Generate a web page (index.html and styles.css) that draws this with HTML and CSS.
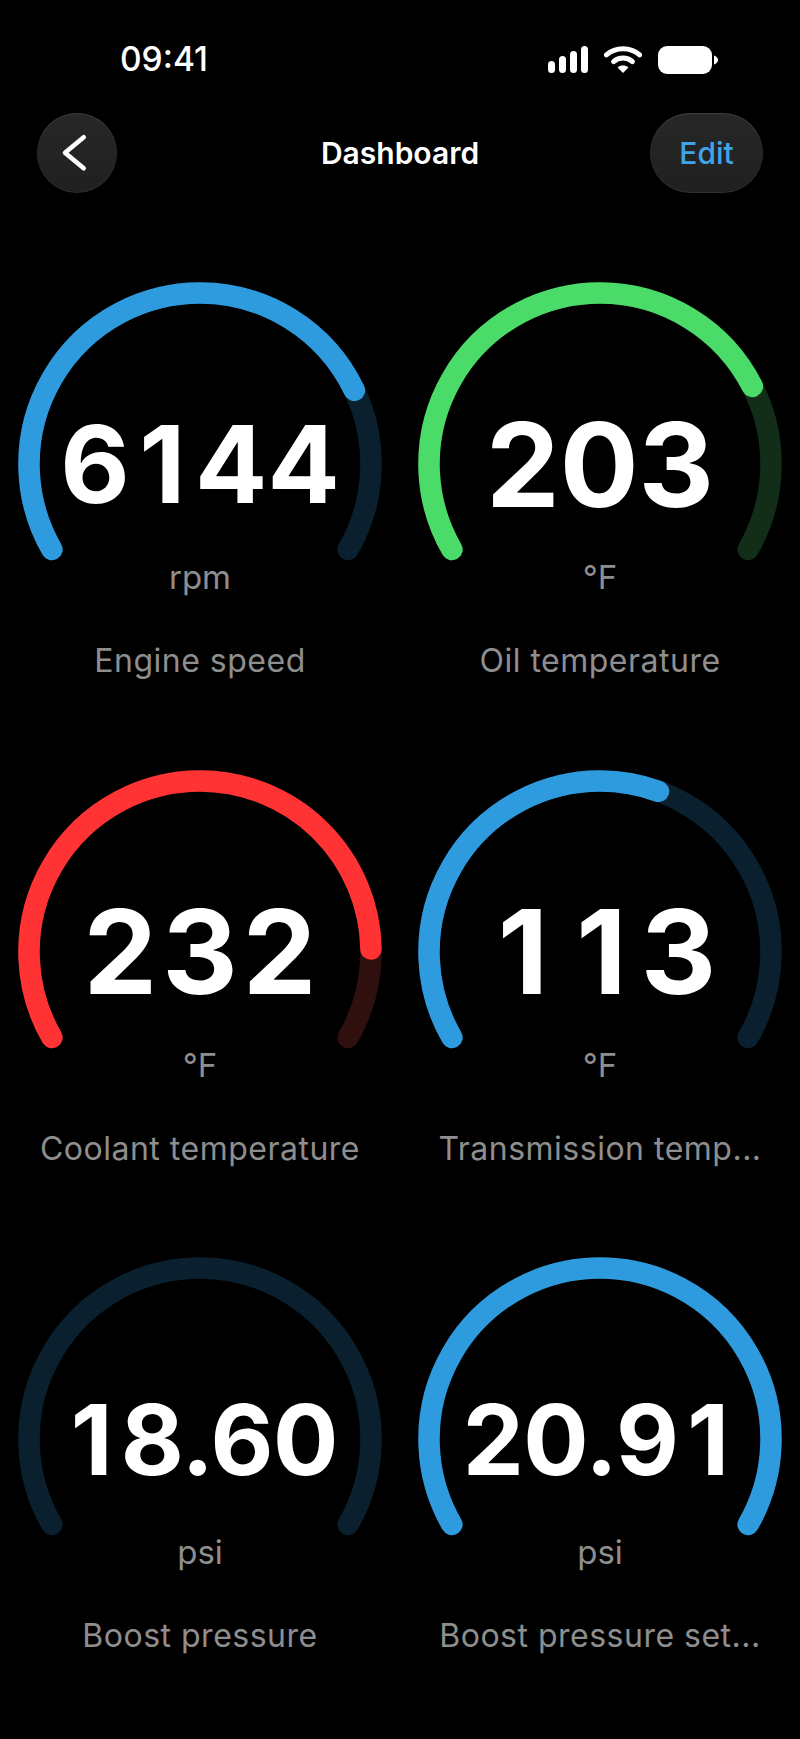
FILE: index.html
```html
<!DOCTYPE html>
<html lang="en">
<head>
<meta charset="utf-8">
<title>Dashboard</title>
<link rel="stylesheet" href="styles.css">
</head>
<body>
<div class="screen">
  <header class="status">
    <span class="time">09:41</span>
    <div class="status-icons">
      <svg class="signal" width="40" height="27" viewBox="0 0 40 27"><rect x="0" y="15" width="7" height="12" rx="3.5"/><rect x="11" y="10" width="7" height="17" rx="3.5"/><rect x="22" y="5" width="7" height="22" rx="3.5"/><rect x="33" y="0" width="7" height="27" rx="3.5"/></svg>
      <svg class="wifi" width="38" height="27" viewBox="0 0 38 27"><path class="wifi-arc" d="M2.4 8.8C11.6 0.6 26.4 0.6 35.6 8.8"/><path class="wifi-arc" d="M9.6 15.6C15 10.9 23 10.9 28.4 15.6"/><path class="wifi-dot" d="M19 27L13.6 21.4C16.6 18.8 21.4 18.8 24.4 21.4Z"/></svg>
      <svg class="battery" width="60" height="28" viewBox="0 0 60 28"><rect x="0" y="0" width="54" height="28" rx="9"/><path d="M56 9.5C58.4 10.2 60 11.8 60 14C60 16.2 58.4 17.8 56 18.5Z"/></svg>
    </div>
  </header>
  <nav class="nav">
    <button class="back" aria-label="Back"><svg width="30" height="40" viewBox="0 0 30 40"><path d="M22.7 4.3L4 19.7L22.7 35.3"/></svg></button>
    <h1 class="title">Dashboard</h1>
    <button class="edit">Edit</button>
  </nav>
  <main class="grid">
    <section class="cell blue">
      <div class="gauge">
        <svg class="dial" width="400" height="280" viewBox="0 0 400 280"><path class="track" d="M51.9 267.5A171 171 0 1 1 348.1 267.5"/><path class="fill" pathLength="240" stroke-dasharray="184.5 1000" d="M51.9 267.5A171 171 0 1 1 348.1 267.5"/></svg>
        <div class="value md">6<span class="one">1</span>44</div>
      </div>
      <div class="unit">rpm</div>
      <div class="label">Engine speed</div>
    </section>
    <section class="cell green">
      <div class="gauge">
        <svg class="dial" width="400" height="280" viewBox="0 0 400 280"><path class="track" d="M51.9 267.5A171 171 0 1 1 348.1 267.5"/><path class="fill" pathLength="240" stroke-dasharray="183 1000" d="M51.9 267.5A171 171 0 1 1 348.1 267.5"/></svg>
        <div class="value lg">203</div>
      </div>
      <div class="unit">°F</div>
      <div class="label">Oil temperature</div>
    </section>
    <section class="cell red">
      <div class="gauge">
        <svg class="dial" width="400" height="280" viewBox="0 0 400 280"><path class="track" d="M51.9 267.5A171 171 0 1 1 348.1 267.5"/><path class="fill" pathLength="240" stroke-dasharray="209 1000" d="M51.9 267.5A171 171 0 1 1 348.1 267.5"/></svg>
        <div class="value lg wide">232</div>
      </div>
      <div class="unit">°F</div>
      <div class="label">Coolant temperature</div>
    </section>
    <section class="cell blue">
      <div class="gauge">
        <svg class="dial" width="400" height="280" viewBox="0 0 400 280"><path class="track" d="M51.9 267.5A171 171 0 1 1 348.1 267.5"/><path class="fill" pathLength="240" stroke-dasharray="140 1000" d="M51.9 267.5A171 171 0 1 1 348.1 267.5"/></svg>
        <div class="value lg"><span class="one">1</span><span class="one">1</span>3</div>
      </div>
      <div class="unit">°F</div>
      <div class="label">Transmission temp...</div>
    </section>
    <section class="cell blue">
      <div class="gauge">
        <svg class="dial" width="400" height="280" viewBox="0 0 400 280"><path class="track" d="M51.9 267.5A171 171 0 1 1 348.1 267.5"/></svg>
        <div class="value sm"><span class="one">1</span>8.60</div>
      </div>
      <div class="unit">psi</div>
      <div class="label">Boost pressure</div>
    </section>
    <section class="cell blue">
      <div class="gauge">
        <svg class="dial" width="400" height="280" viewBox="0 0 400 280"><path class="fill" d="M51.9 267.5A171 171 0 1 1 348.1 267.5"/></svg>
        <div class="value sm">20.9<span class="one">1</span></div>
      </div>
      <div class="unit">psi</div>
      <div class="label">Boost pressure set...</div>
    </section>
  </main>
</div>
</body>
</html>
```
FILE: styles.css
```css
* { box-sizing: border-box; }
html, body { margin: 0; padding: 0; background: #000; }
body { font-family: Inter, "Liberation Sans", sans-serif; color: #fff; }
.screen { width: 800px; height: 1739px; overflow: hidden; background: #000; }

.status { height: 113px; padding: 43px 82px 0 120px; display: flex; justify-content: space-between; align-items: flex-start; }
.time { font-size: 33.5px; line-height: 32px; font-weight: 500; }
.status-icons { display: flex; align-items: flex-start; gap: 16px; padding-top: 3px; }
.status-icons svg { display: block; fill: #fff; }
.wifi-arc { fill: none; stroke: #fff; stroke-width: 5; stroke-linecap: round; }

.nav { display: grid; grid-template-columns: 1fr auto 1fr; align-items: center; padding: 0 37px; height: 80px; }
.back, .edit { border: 0; padding: 0; height: 80px; color: inherit; font: inherit; background: linear-gradient(#272727, #202020); box-shadow: inset 0 1px 1px rgba(255,255,255,.12), inset 0 -1px 1px rgba(255,255,255,.07); }
.back { width: 80px; border-radius: 50%; display: flex; align-items: center; justify-content: center; justify-self: start; }
.back svg { display: block; fill: none; stroke: #fff; stroke-width: 4.6; stroke-linecap: round; stroke-linejoin: round; margin-left: -2px; }
.title { margin: 0; font-size: 30px; line-height: 36px; font-weight: 600; }
.edit { width: 113px; border-radius: 40px; justify-self: end; color: #3fa5e8; font-size: 30px; font-weight: 500; }

.grid { margin-top: 89px; display: grid; grid-template-columns: 400px 400px; grid-auto-rows: 487.5px; }
.cell { display: flex; flex-direction: column; align-items: center; }
.gauge { display: grid; width: 400px; height: 280px; }
.dial, .value { grid-area: 1 / 1; }
.dial { display: block; fill: none; stroke-width: 21.5; stroke-linecap: round; }
.track { stroke: var(--track); }
.fill { stroke: var(--accent); }
.blue { --accent: #2e9bde; --track: #0b202e; }
.green { --accent: #4bdb69; --track: #122d18; }
.red { --accent: #ff3333; --track: #300f0f; }
.value { margin-top: calc(182px - .5em); line-height: 1; font-weight: 700; text-align: center; align-self: start; }
.one { padding: 0 .09em; }
.lg { font-size: 117px; }
.lg .one { padding: 0 .12em; }
.wide { letter-spacing: 5px; text-indent: 5px; }
.md { font-size: 107px; }
.sm { font-size: 97px; letter-spacing: -.5px; }
.unit { margin-top: -3px; font-size: 33px; line-height: 36px; color: #8e8e8e; }
.label { margin-top: 48px; font-size: 32px; line-height: 36px; letter-spacing: .5px; color: #8e8e8e; white-space: nowrap; }
```
